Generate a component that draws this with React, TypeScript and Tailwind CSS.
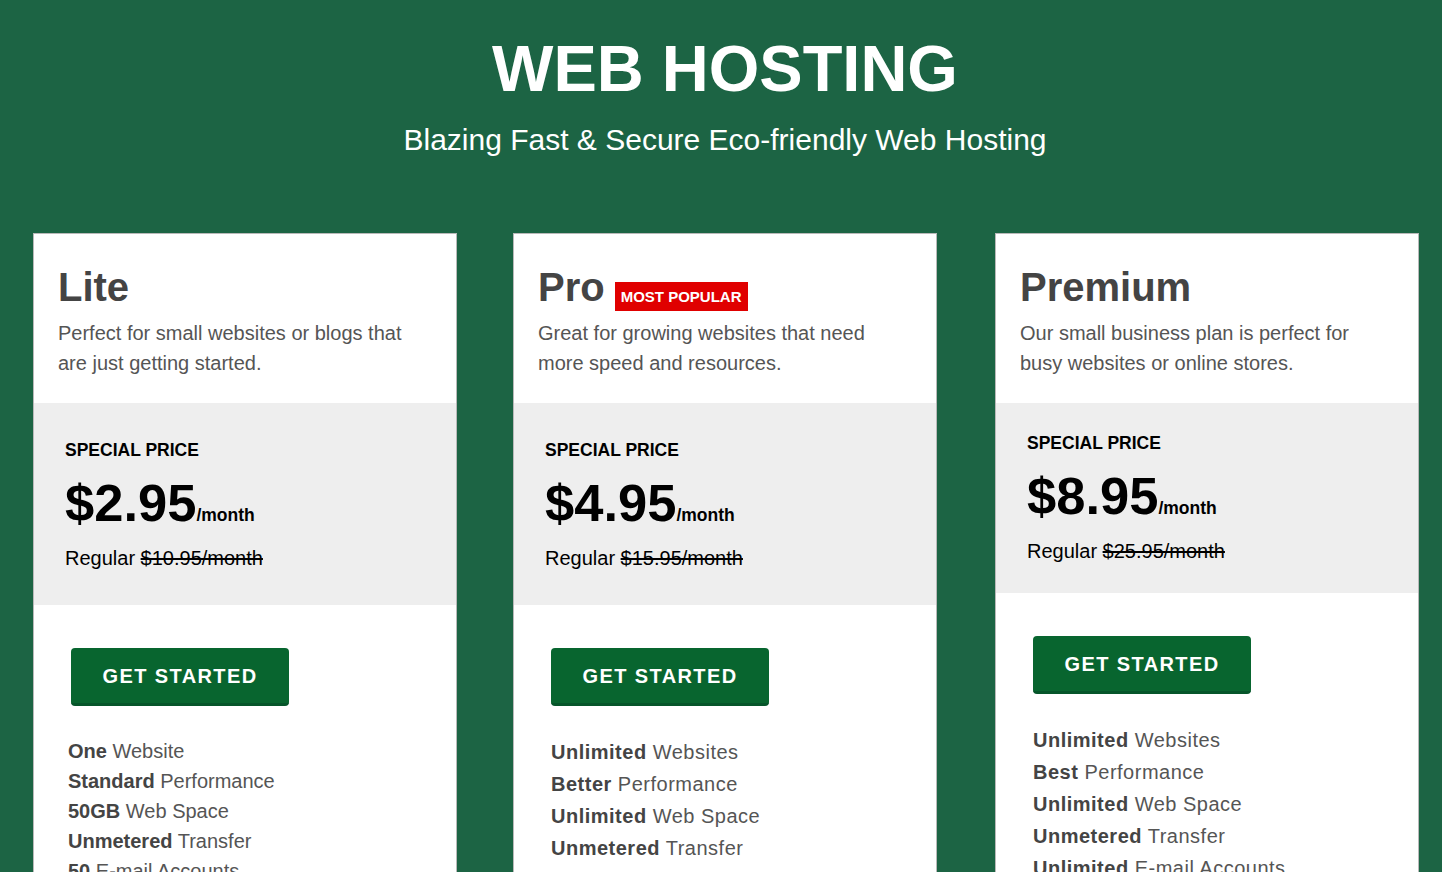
import React from "react";

type Feature = { strong: string; rest: string };

interface Plan {
  name: string;
  popular?: boolean;
  description: string[];
  price: string;
  regular: string;
  features: Feature[];
  compact?: boolean;
}

const plans: Plan[] = [
  {
    name: "Lite",
    description: ["Perfect for small websites or blogs that", "are just getting started."],
    price: "$2.95",
    regular: "$10.95/month",
    features: [
      { strong: "One", rest: "Website" },
      { strong: "Standard", rest: "Performance" },
      { strong: "50GB", rest: "Web Space" },
      { strong: "Unmetered", rest: "Transfer" },
      { strong: "50", rest: "E-mail Accounts" },
      { strong: "Free", rest: "SSL Certificate" },
    ],
  },
  {
    name: "Pro",
    popular: true,
    description: ["Great for growing websites that need", "more speed and resources."],
    price: "$4.95",
    regular: "$15.95/month",
    features: [
      { strong: "Unlimited", rest: "Websites" },
      { strong: "Better", rest: "Performance" },
      { strong: "Unlimited", rest: "Web Space" },
      { strong: "Unmetered", rest: "Transfer" },
      { strong: "Unlimited", rest: "E-mail Accounts" },
      { strong: "Free", rest: "SSL Certificate" },
    ],
  },
  {
    name: "Premium",
    compact: true,
    description: ["Our small business plan is perfect for", "busy websites or online stores."],
    price: "$8.95",
    regular: "$25.95/month",
    features: [
      { strong: "Unlimited", rest: "Websites" },
      { strong: "Best", rest: "Performance" },
      { strong: "Unlimited", rest: "Web Space" },
      { strong: "Unmetered", rest: "Transfer" },
      { strong: "Unlimited", rest: "E-mail Accounts" },
      { strong: "Free", rest: "SSL Certificate" },
    ],
  },
];

function PlanCard({ plan, first }: { plan: Plan; first?: boolean }) {
  return (
    <div className="w-[424px] shrink-0 border border-[#b9b9b9] bg-white">
      <div className="px-[24px] pt-[29px] pb-[25px]">
        <div className="flex h-[48px] items-end gap-[10px]">
          <h2 className="text-[40px] leading-[48px] font-bold text-[#444]">{plan.name}</h2>
          {plan.popular && (
            <span className="bg-[#e00000] px-[6px] text-[15px] leading-[29px] font-bold text-white">
              MOST POPULAR
            </span>
          )}
        </div>
        <p className="mt-[7px] text-[20px] leading-[30px] text-[#555]">
          {plan.description[0]}
          <br />
          {plan.description[1]}
        </p>
      </div>

      <div
        className={
          plan.compact
            ? "bg-[#eeeeee] px-[31px] pt-[27px] pb-[27px] text-black"
            : "bg-[#eeeeee] px-[31px] pt-[34px] pb-[32px] text-black"
        }
      >
        <div className="text-[17.5px] leading-[26px] font-bold">SPECIAL PRICE</div>
        <div className="mt-[13px] flex items-baseline">
          <span className="text-[52.5px] leading-[54px] font-bold">{plan.price}</span>
          <span className="text-[17.5px] font-bold">/month</span>
        </div>
        <div className="mt-[13px] text-[20px] leading-[30px]">
          Regular <span className="line-through">{plan.regular}</span>
        </div>
      </div>

      <div className="pt-[43px] pl-[37px] pb-10">
        <button
          type="button"
          className="h-[58px] w-[218px] rounded-[4px] border-b-[3px] border-[#06552a] bg-[#08652f] text-[20px] font-bold tracking-[1.4px] text-white"
        >
          GET STARTED
        </button>
        <ul
          className={
            first
              ? "mt-[30px] -ml-[3px] text-[20px] leading-[30px] text-[#555]"
              : "mt-[30px] text-[20px] leading-[32px] tracking-[0.5px] text-[#555]"
          }
        >
          {plan.features.map((f, i) => (
            <li key={i}>
              <span className="font-bold text-[#444]">{f.strong}</span> {f.rest}
            </li>
          ))}
        </ul>
      </div>
    </div>
  );
}

export default function App() {
  return (
    <div
      className="h-[872px] overflow-hidden bg-[#1c6444]"
      style={{ fontFamily: '"Liberation Sans", Arial, sans-serif' }}
    >
      <header className="pt-[36px] pl-[8px] text-center text-white">
        <h1 className="text-[65px] leading-[66px] font-bold">WEB HOSTING</h1>
        <p className="mt-[20px] text-[30px] leading-[36px]">Blazing Fast &amp; Secure Eco-friendly Web Hosting</p>
      </header>
      <div className="mt-[75px] flex gap-[56px] pl-[33px]">
        {plans.map((p, i) => (
          <div key={p.name} className={i === 2 ? "ml-[2px]" : ""}>
            <PlanCard plan={p} first={i === 0} />
          </div>
        ))}
      </div>
    </div>
  );
}
